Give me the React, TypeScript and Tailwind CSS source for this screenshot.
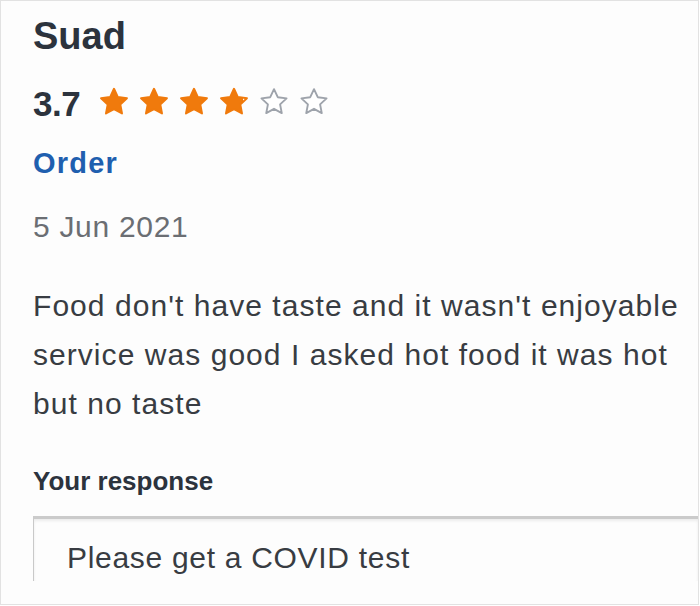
import React from "react";

function starPoints(cx: number, cy: number, R: number, r: number) {
  const pts: string[] = [];
  for (let i = 0; i < 10; i++) {
    const rad = i % 2 === 0 ? R : r;
    const a = (-90 + i * 36) * (Math.PI / 180);
    pts.push(`${(cx + rad * Math.cos(a)).toFixed(2)},${(cy + rad * Math.sin(a)).toFixed(2)}`);
  }
  return pts.join(" ");
}

const PTS = starPoints(15, 15.4, 13.6, 6.6);

function Star({ fill, id }: { fill: number; id: string }) {
  const orange = "#f07a0c";
  if (fill >= 1) {
    return (
      <svg width="30" height="28" viewBox="0 0 30 28">
        <polygon points={PTS} fill={orange} stroke={orange} strokeWidth="2" strokeLinejoin="round" />
      </svg>
    );
  }
  if (fill <= 0) {
    return (
      <svg width="30" height="28" viewBox="0 0 30 28">
        <polygon points={starPoints(15, 15.4, 13.2, 6.4)} fill="#ffffff" stroke="#9ea3ab" strokeWidth="1.9" strokeLinejoin="round" />
      </svg>
    );
  }
  return (
    <svg width="30" height="28" viewBox="0 0 30 28">
      <defs>
        <linearGradient id={id} x1="0" x2="1" y1="0" y2="0">
          <stop offset={fill} stopColor={orange} />
          <stop offset={fill} stopColor="#ffffff" />
        </linearGradient>
      </defs>
      <polygon points={PTS} fill={`url(#${id})`} stroke={orange} strokeWidth="2" strokeLinejoin="round" />
    </svg>
  );
}

export default function App() {
  const font = { fontFamily: '"Liberation Sans", Arial, sans-serif' };
  return (
    <div className="w-[700px] h-[606px] bg-white">
      <div
        className="w-[699px] h-[605px] border border-[#e2e2e2] bg-[#fdfdfd] overflow-hidden pl-[32px] pt-[12px] flex flex-col"
        style={font}
      >
        <div className="text-[38px] leading-[46px] font-bold text-[#2c333d]">Suad</div>

        <div className="mt-[25px] flex items-start h-[40px]">
          <span className="text-[35px] leading-[40px] font-bold tracking-[-0.5px] text-[#2c333d]">3.7</span>
          <div className="ml-[19px] mt-[3px] flex gap-[10px]">
            <Star fill={1} id="s1" />
            <Star fill={1} id="s2" />
            <Star fill={1} id="s3" />
            <Star fill={0.84} id="s4" />
            <Star fill={0} id="s5" />
            <Star fill={0} id="s6" />
          </div>
        </div>

        <div className="mt-[21px] text-[29px] leading-[36px] font-bold tracking-[1.2px] text-[#1f5faf]">Order</div>

        <div className="mt-[28px] text-[30px] leading-[36px] tracking-[0.7px] text-[#6b6e73]">5 Jun 2021</div>

        <div className="mt-[36px] text-[30px] leading-[49px] tracking-[1.05px] text-[#383c42] whitespace-nowrap">
          <div>Food don't have taste and it wasn't enjoyable</div>
          <div>service was good I asked hot food it was hot</div>
          <div>but no taste</div>
        </div>

        <div className="mt-[37px] text-[26px] leading-[32px] font-bold text-[#2c333d]">Your response</div>

        <div className="mt-[19px] h-[65px] border-l border-l-[#c9c9c9] border-t-[3px] border-t-[#cbcbcb] shadow-[inset_0_2px_3px_rgba(0,0,0,0.07)] bg-[#fdfdfd] pl-[33px] pt-[21px]">
          <div className="text-[30px] leading-[36px] tracking-[0.7px] text-[#383c42] whitespace-nowrap">
            Please get a COVID test
          </div>
        </div>
      </div>
    </div>
  );
}
